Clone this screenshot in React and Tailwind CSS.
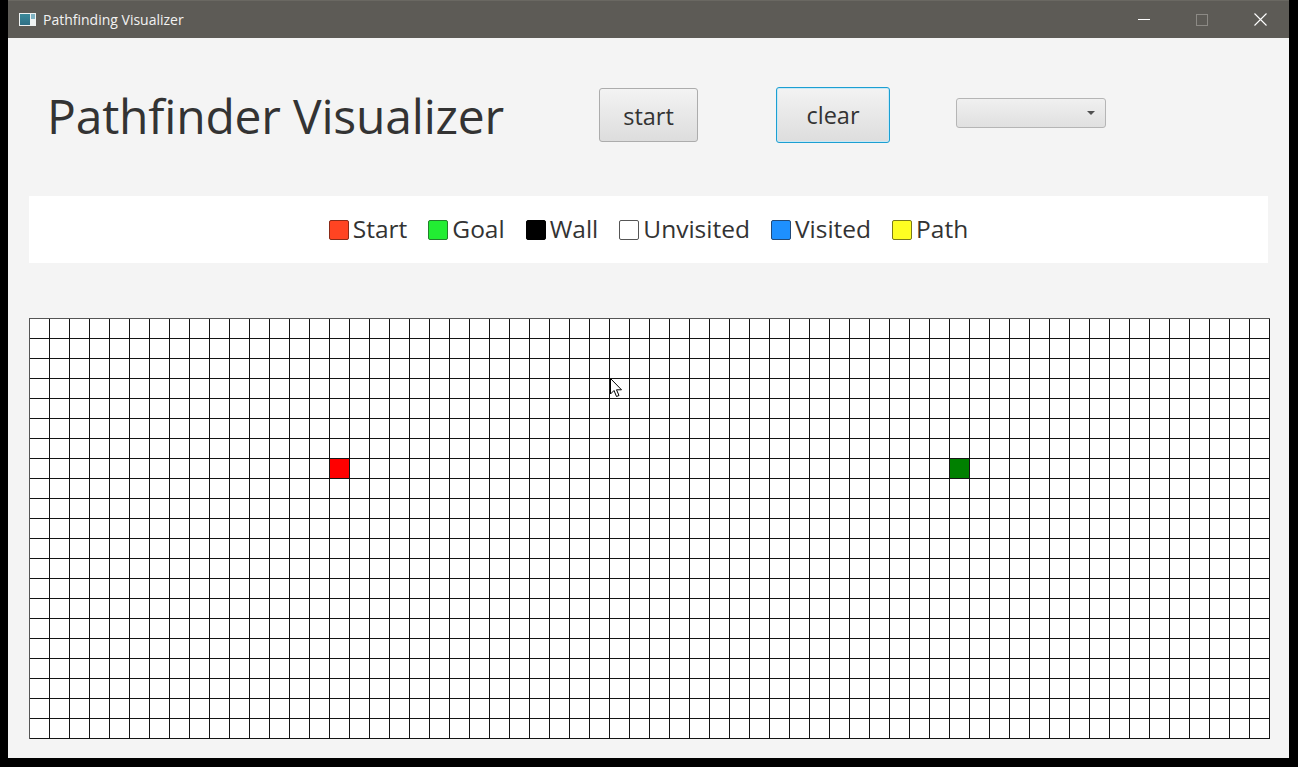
import React from 'react';

const COLS = 62;
const ROWS = 21;
const START = { r: 7, c: 15 };
const GOAL = { r: 7, c: 46 };

const legend = [
    { label: 'Start', box: 'bg-[#ff4422] border-[#8a2b18]' },
    { label: 'Goal', box: 'bg-[#22ee33] border-[#23802c]' },
    { label: 'Wall', box: 'bg-black border-black' },
    { label: 'Unvisited', box: 'bg-white border-[#555555]' },
    { label: 'Visited', box: 'bg-[#1e90ff] border-[#224a78]' },
    { label: 'Path', box: 'bg-[#ffff22] border-[#7a7a1a]' },
];

function TitleBar() {
    return (
        <div className="h-[38px] bg-[#5d5b56] flex items-center text-[#f2f2f2] border-t border-[#6a6862]">
            {/* app icon */}
            <div className="ml-[11px] w-[17px] h-[13px] bg-[#eef2f2] p-[1px] flex gap-[1px]">
                <div className="w-[10px] h-full bg-gradient-to-b from-[#3a8a9a] to-[#2f6f86]" />
                <div className="flex-1 flex flex-col gap-[1px]">
                    <div className="h-[5px] bg-[#7fb2c2]" />
                    <div className="flex-1 bg-[#eef2f2]" />
                </div>
            </div>
            <span className="ml-[7px] text-[14px] font-['Open_Sans',sans-serif] leading-none">Pathfinding Visualizer</span>
            <div className="ml-auto flex items-center h-full">
                <div className="w-[58px] h-full flex items-center justify-center">
                    <div className="w-[12px] h-[1px] bg-white" />
                </div>
                <div className="w-[58px] h-full flex items-center justify-center">
                    <div className="w-[12px] h-[12px] border border-[#8c8a85]" />
                </div>
                <div className="w-[58px] h-full flex items-center justify-center">
                    <svg width="13" height="13" viewBox="0 0 13 13">
                        <path d="M0.5 0.5 L12.5 12.5 M12.5 0.5 L0.5 12.5" stroke="#ffffff" strokeWidth="1.1" />
                    </svg>
                </div>
            </div>
        </div>
    );
}

function Grid() {
    const cells = [];
    for (let r = 0; r < ROWS; r++) {
        for (let c = 0; c < COLS; c++) {
            let bg = 'bg-white';
            if (r === START.r && c === START.c) bg = 'bg-[#ff0000]';
            if (r === GOAL.r && c === GOAL.c) bg = 'bg-[#008000]';
            cells.push(<div key={r + '-' + c} className={`w-[20px] h-[20px] border-r border-b border-[#141414] ${bg}`} />);
        }
    }
    return (
        <div className="relative mt-[55px] w-fit border-l border-t border-[#555555]">
            <div className="grid grid-cols-[repeat(62,20px)]">{cells}</div>
            {/* mouse pointer */}
            <svg className="absolute left-[580px] top-[59px]" width="13" height="21" viewBox="0 0 13 21">
                <path d="M0.5 0.5 L0.5 16 L4 12.5 L6.5 18.5 L9 17.5 L6.5 11.8 L11.5 11.8 Z" fill="#ffffff" stroke="#000000" strokeWidth="1" strokeLinejoin="round" />
            </svg>
        </div>
    );
}

export default function App() {
    return (
        <div className="w-[1298px] h-[767px] bg-black pl-[8px] pr-[9px] pb-[9px] flex flex-col overflow-hidden">
            <TitleBar />
            <div className="flex-1 bg-[#f4f4f4] px-[21px] font-['Open_Sans',sans-serif] text-[#333333]">
                <div className="h-[154px] flex items-center">
                    <div className="w-[570px] pl-[18px]">
                        <h1 className="text-[48px] leading-none tracking-[-0.2px] pt-[1px]">Pathfinder Visualizer</h1>
                    </div>
                    <button className="w-[99px] h-[54px] pt-[3px] rounded-[3px] border border-[#acacac] bg-gradient-to-b from-[#f3f3f3] to-[#dddddd] text-[23.5px] leading-none text-[#333333]">
                        start
                    </button>
                    <button className="ml-[78px] w-[114px] h-[56px] pt-[2px] rounded-[3px] border border-[#1b9fd2] shadow-[inset_0_0_0_1px_#c9e8f5] bg-gradient-to-b from-[#f3f3f3] to-[#dddddd] text-[23.5px] leading-none text-[#333333]">
                        clear
                    </button>
                    <div className="ml-[66px] -mt-[4px] w-[150px] h-[30px] rounded-[3px] border border-[#b5b5b5] bg-gradient-to-b from-[#f0f0f0] to-[#e0e0e0] flex items-center justify-end pr-[10px]">
                        <div className="w-0 h-0 border-l-[4px] border-r-[4px] border-t-[4px] border-l-transparent border-r-transparent border-t-[#505050]" />
                    </div>
                </div>
                <div className="mt-[4px] h-[67px] bg-white flex items-center justify-center gap-[21px]">
                    {legend.map(item => (
                        <div key={item.label} className="flex items-center">
                            <div className={`w-[20px] h-[20px] rounded-[2px] border ${item.box}`} />
                            <span className="ml-[4px] text-[24.5px] leading-none text-[#333333]">{item.label}</span>
                        </div>
                    ))}
                </div>
                <Grid />
            </div>
        </div>
    );
}
